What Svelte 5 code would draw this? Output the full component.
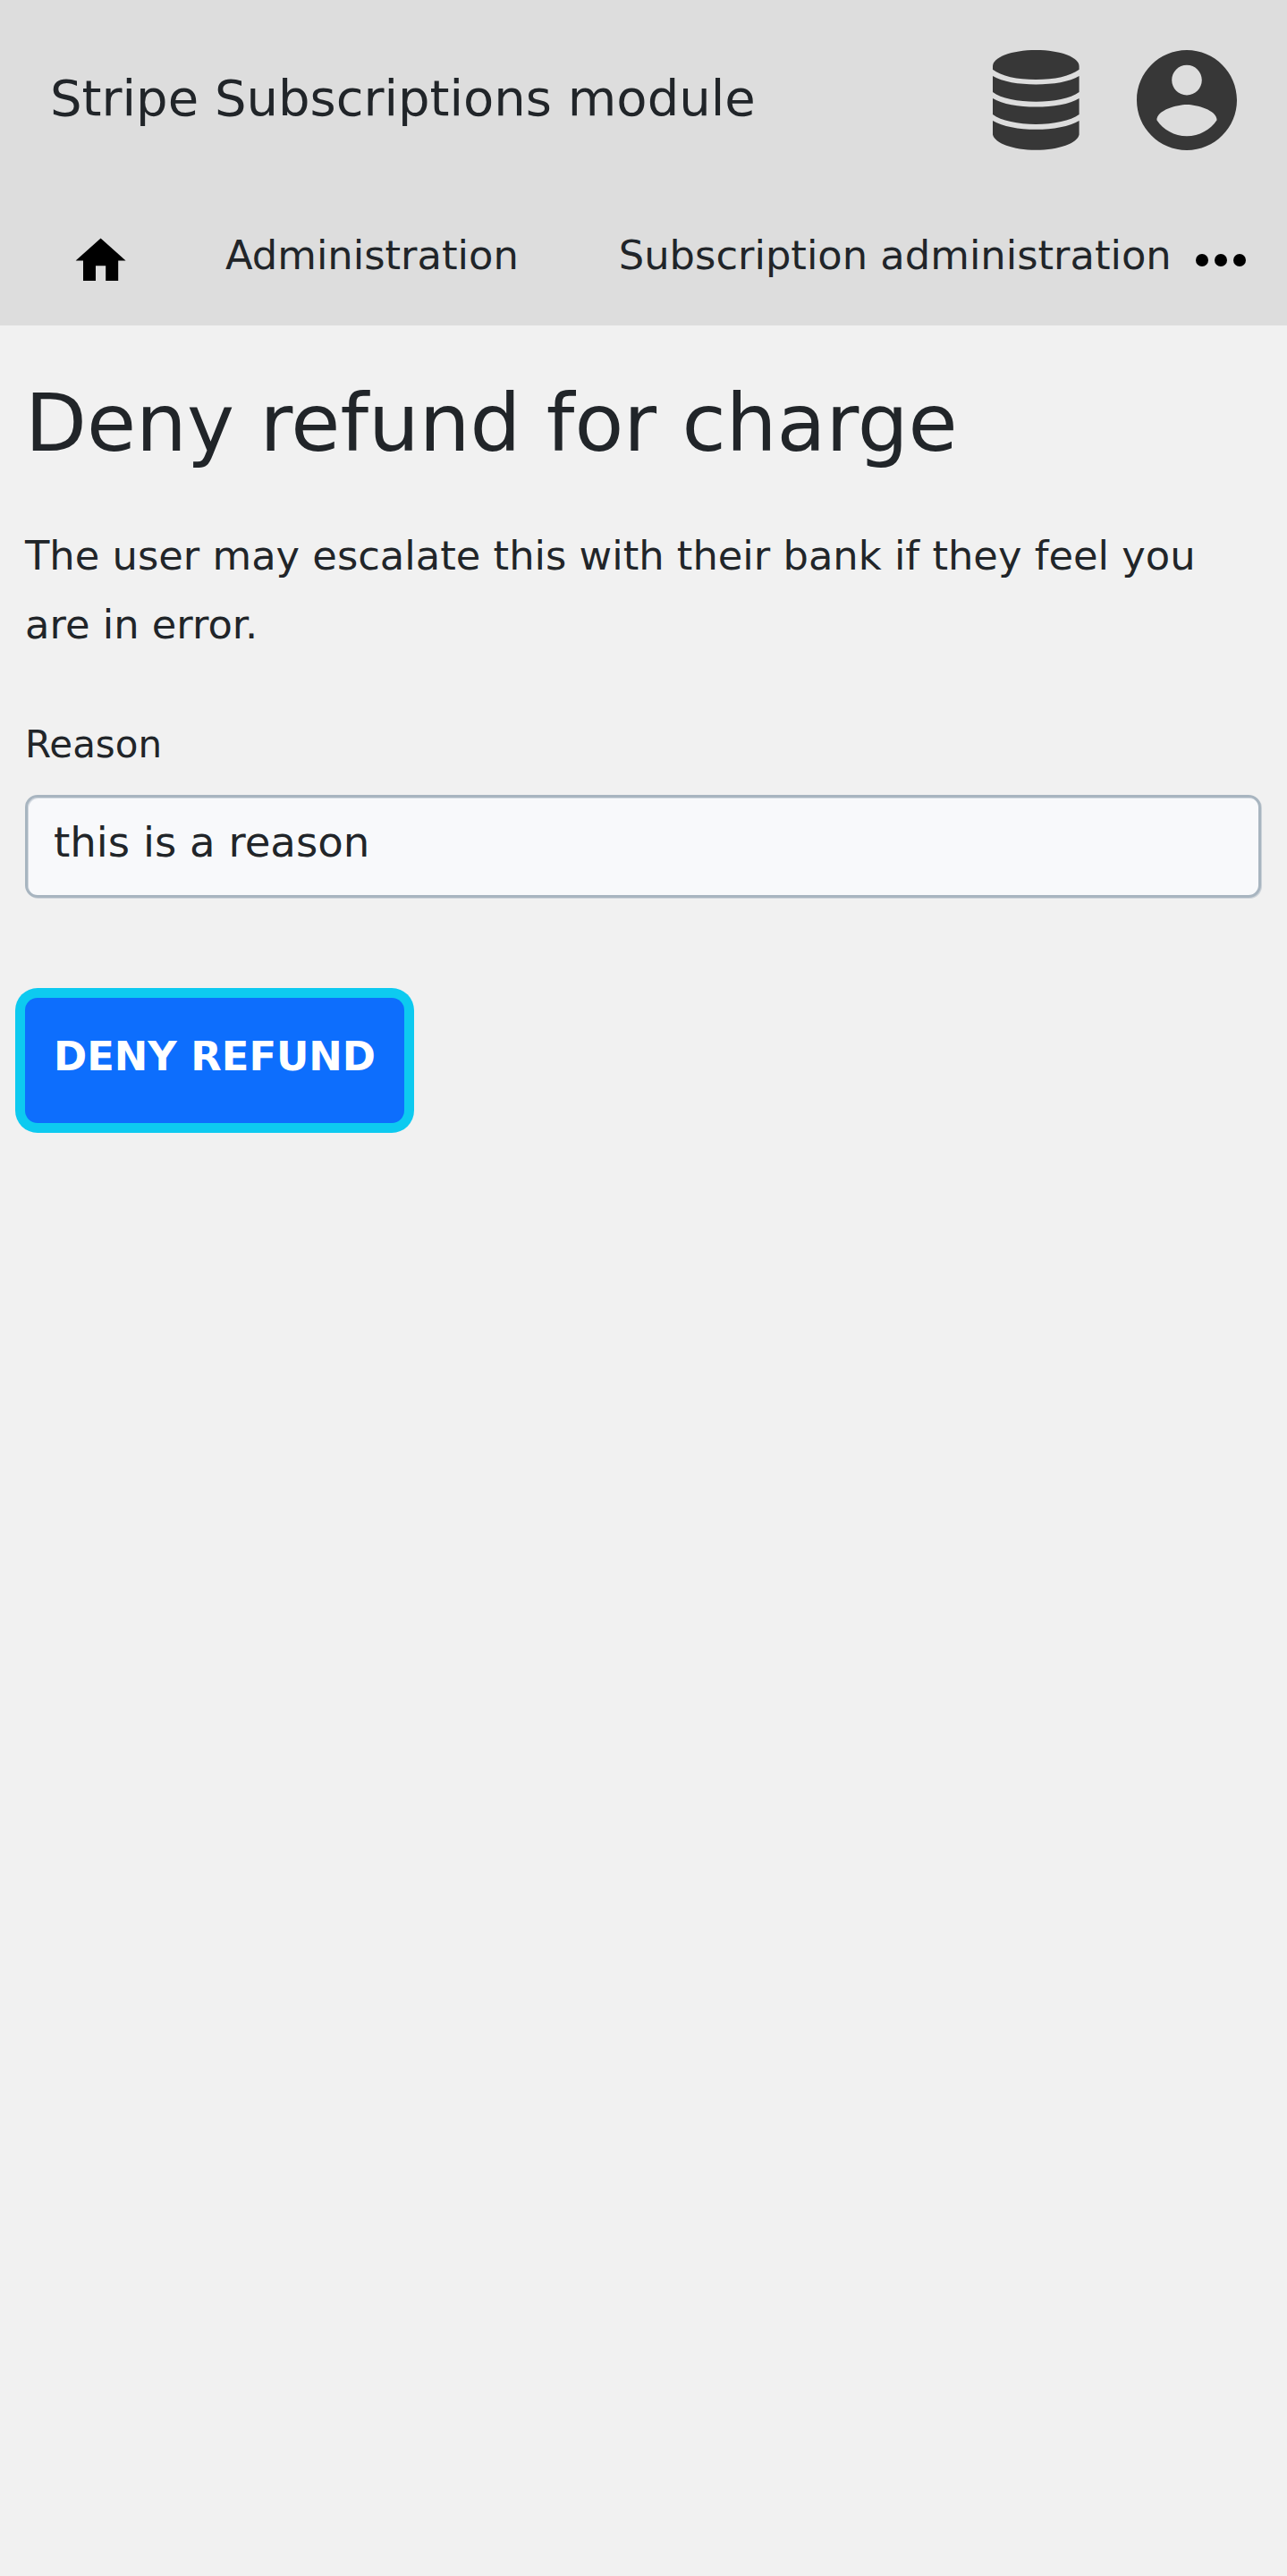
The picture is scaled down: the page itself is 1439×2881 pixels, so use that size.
<script>
  let reason = $state('this is a reason');
</script>

<div class="page">
  <header>
    <div class="bar">
      <span class="title">Stripe Subscriptions module</span>
      <svg class="database" viewBox="0 0 96.6 112" aria-hidden="true">
        <path d="M0 21.7V18C0 8 21 0 48.3 0S96.6 8 96.6 18V21.7C87 29 69 33 48.3 33S9 29 0 21.7Z" />
        <path d="M0 29C11 35.5 29 38.4 48.3 38.4S86 35.5 96.6 29V47C87 54 68 57.8 48.3 57.8S9 54 0 47Z" />
        <path d="M0 54C11 60.5 29 63.6 48.3 63.6S86 60.5 96.6 54V72C87 79 68 82.9 48.3 82.9S9 79 0 72Z" />
        <path d="M0 79C11 85.5 29 88.8 48.3 88.8S86 85.5 96.6 79V94.5C95 104 74 111.8 48.3 111.8S2 104 0 94.5Z" />
      </svg>
      <svg class="account" viewBox="2 2 20 20" aria-hidden="true">
        <path d="M12 2C6.48 2 2 6.48 2 12s4.48 10 10 10 10-4.48 10-10S17.52 2 12 2zm0 3c1.66 0 3 1.34 3 3s-1.34 3-3 3-3-1.34-3-3 1.34-3 3-3zm0 14.2c-2.5 0-4.71-1.28-6-3.22.03-1.99 4-3.08 6-3.08 1.99 0 5.97 1.09 6 3.08-1.29 1.94-3.5 3.22-6 3.22z" />
      </svg>
    </div>
    <nav>
      <svg class="home" viewBox="0 0 24 24" aria-hidden="true">
        <path d="M10 20v-6h4v6h5v-8h3L12 3 2 12h3v8z" />
      </svg>
      <span class="link">Administration</span>
      <span class="link">Subscription administration</span>
      <svg class="more" viewBox="0 0 24 24" aria-hidden="true">
        <circle cx="6" cy="12" r="2" />
        <circle cx="12" cy="12" r="2" />
        <circle cx="18" cy="12" r="2" />
      </svg>
    </nav>
  </header>
  <main>
    <h1>Deny refund for charge</h1>
    <p>The user may escalate this with their bank if they feel you are in error.</p>
    <label for="reason">Reason</label>
    <input id="reason" type="text" bind:value={reason} />
    <button type="button">DENY REFUND</button>
  </main>
</div>

<style>
  :global(body) {
    margin: 0;
    background: #f1f1f1;
  }
  .page {
    box-sizing: border-box;
    min-height: 2881px;
    background: #f1f1f1;
    color: #212529;
    font-family: 'DejaVu Sans', sans-serif;
    font-size: 44.8px;
  }
  header {
    height: 364px;
    background: #ddd;
    overflow: hidden;
  }
  .bar {
    display: flex;
    align-items: flex-start;
    box-sizing: border-box;
    height: 224px;
    padding: 56px 56px 0;
  }
  .title {
    flex: 1;
    margin-top: -2px;
    font-size: 56px;
    line-height: 112px;
    white-space: nowrap;
  }
  svg {
    display: block;
    flex: none;
  }
  .database {
    width: 96.6px;
    height: 112px;
    margin-right: 64px;
    fill: #373737;
  }
  .account {
    width: 112px;
    height: 112px;
    fill: #373737;
  }
  nav {
    display: flex;
    align-items: flex-start;
    padding-left: 79px;
    white-space: nowrap;
  }
  .home {
    width: 67.2px;
    height: 67.2px;
    margin: 34px 49.8px 0 0;
  }
  .link {
    padding: 23px 56px 0;
    line-height: 77px;
  }
  .link + .link {
    padding-right: 0;
  }
  .more {
    width: 84px;
    height: 84px;
    margin: 24.5px 32px 0 auto;
  }
  main {
    padding: 56px 28px 0;
  }
  h1 {
    margin: 0;
    font-size: 89.6px;
    font-weight: 400;
    line-height: 106px;
  }
  p {
    margin: 57px 0 0;
    line-height: 77px;
  }
  label {
    display: block;
    margin-top: 64px;
    font-size: 42px;
    line-height: 63px;
  }
  input {
    display: block;
    box-sizing: border-box;
    width: 1382px;
    height: 115px;
    margin: 25px 0 0;
    padding: 0 28px 9px 29px;
    border: 3px solid #a8b5c0;
    border-radius: 14px;
    background: #f8f9fb;
    box-shadow: inset 1px 1px 0 #d0d7de, 1px 1px 0 #cdd3d9;
    color: #212529;
    font: 46.67px 'DejaVu Sans', sans-serif;
  }
  button {
    display: block;
    box-sizing: border-box;
    width: 424px;
    height: 140px;
    margin: 112px 0 0;
    padding: 0 0 9px;
    border: 0;
    border-radius: 14px;
    background: #0d6efd;
    box-shadow: 0 0 0 11px #0dcaf0;
    color: #fff;
    font: 700 44.8px 'DejaVu Sans', sans-serif;
  }
</style>
